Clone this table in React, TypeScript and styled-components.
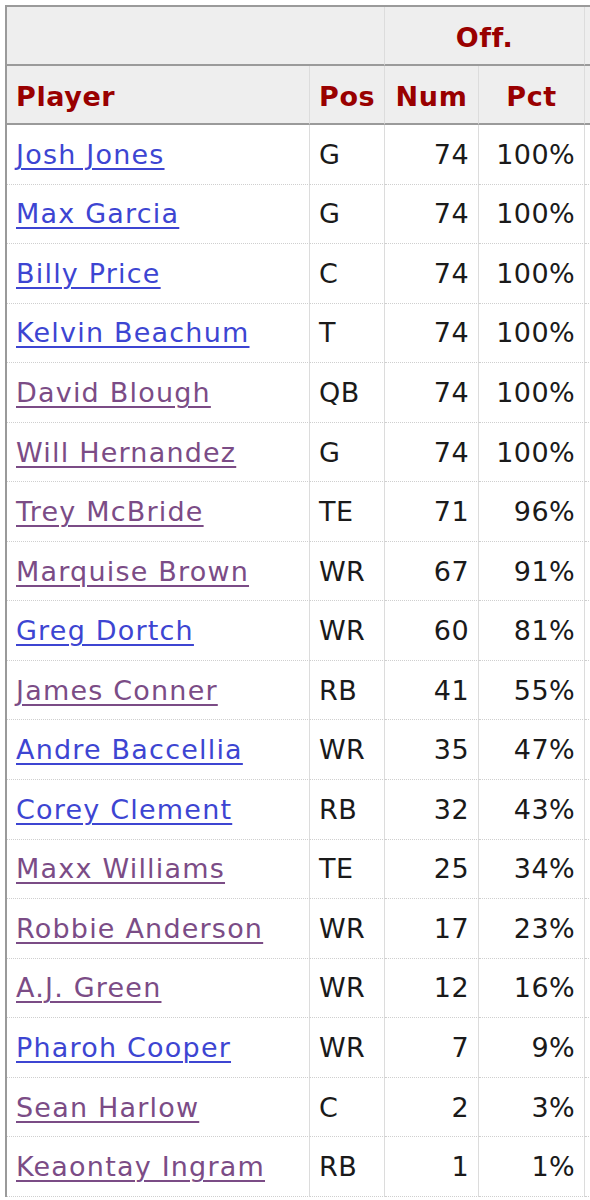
import React from "react";
import styled, { createGlobalStyle } from "styled-components";

const Global = createGlobalStyle`
  html, body {
    margin: 0;
    padding: 0;
    overflow: hidden;
    background: #fff;
  }
  body {
    font-family: "DejaVu Sans", Verdana, sans-serif;
  }
`;

const Wrap = styled.div`
  padding: 5px 0 0 5px;
  width: 800px;
`;

const Table = styled.table`
  border-collapse: separate;
  border-spacing: 0;
  table-layout: fixed;
  width: 680px;
  border-top: 2px solid #9a9a9a;
  border-left: 2px solid #9a9a9a;
  font-size: 27px;
  color: #1a1a1a;
`;

const HeadCell = styled.th<{ $align?: string }>`
  background: #eeeeee;
  color: #990000;
  font-weight: bold;
  height: 59px;
  padding: 3px 9px 0;
  letter-spacing: 0.6px;
  text-align: ${(p) => p.$align || "left"};
  border-bottom: 2px solid #9a9a9a;
  border-right: 1px solid #dcdcdc;
  white-space: nowrap;
  box-sizing: border-box;
  vertical-align: middle;
`;

const Cell = styled.td<{ $align?: string }>`
  height: 59.55px;
  box-sizing: border-box;
  padding: 0 9px;
  letter-spacing: 0.4px;
  text-align: ${(p) => p.$align || "left"};
  border-bottom: 1px dotted #cfcfcf;
  border-right: 1px solid #dcdcdc;
  white-space: nowrap;
  vertical-align: middle;
`;

const PlayerLink = styled.a<{ $visited?: boolean }>`
  color: ${(p) => (p.$visited ? "#7b4c86" : "#3d45d2")};
  letter-spacing: 1.2px;
  text-decoration: underline;
  text-underline-offset: 4px;
  text-decoration-thickness: 1.5px;
`;

type Row = { name: string; pos: string; num: number; pct: string; v: boolean };

const rows: Row[] = [
  { name: "Josh Jones", pos: "G", num: 74, pct: "100%", v: false },
  { name: "Max Garcia", pos: "G", num: 74, pct: "100%", v: false },
  { name: "Billy Price", pos: "C", num: 74, pct: "100%", v: false },
  { name: "Kelvin Beachum", pos: "T", num: 74, pct: "100%", v: false },
  { name: "David Blough", pos: "QB", num: 74, pct: "100%", v: true },
  { name: "Will Hernandez", pos: "G", num: 74, pct: "100%", v: true },
  { name: "Trey McBride", pos: "TE", num: 71, pct: "96%", v: true },
  { name: "Marquise Brown", pos: "WR", num: 67, pct: "91%", v: true },
  { name: "Greg Dortch", pos: "WR", num: 60, pct: "81%", v: false },
  { name: "James Conner", pos: "RB", num: 41, pct: "55%", v: true },
  { name: "Andre Baccellia", pos: "WR", num: 35, pct: "47%", v: false },
  { name: "Corey Clement", pos: "RB", num: 32, pct: "43%", v: false },
  { name: "Maxx Williams", pos: "TE", num: 25, pct: "34%", v: true },
  { name: "Robbie Anderson", pos: "WR", num: 17, pct: "23%", v: true },
  { name: "A.J. Green", pos: "WR", num: 12, pct: "16%", v: true },
  { name: "Pharoh Cooper", pos: "WR", num: 7, pct: "9%", v: false },
  { name: "Sean Harlow", pos: "C", num: 2, pct: "3%", v: true },
  { name: "Keaontay Ingram", pos: "RB", num: 1, pct: "1%", v: true },
];

export default function App() {
  return (
    <>
      <Global />
      <Wrap>
        <Table>
          <colgroup>
            <col style={{ width: 303 }} />
            <col style={{ width: 75 }} />
            <col style={{ width: 94 }} />
            <col style={{ width: 106 }} />
            <col style={{ width: 100 }} />
          </colgroup>
          <thead>
            <tr>
              <HeadCell colSpan={2}></HeadCell>
              <HeadCell colSpan={2} $align="center">
                Off.
              </HeadCell>
              <HeadCell></HeadCell>
            </tr>
            <tr>
              <HeadCell>Player</HeadCell>
              <HeadCell>Pos</HeadCell>
              <HeadCell $align="center">Num</HeadCell>
              <HeadCell $align="center">Pct</HeadCell>
              <HeadCell></HeadCell>
            </tr>
          </thead>
          <tbody>
            {rows.map((r) => (
              <tr key={r.name}>
                <Cell>
                  <PlayerLink href="#" $visited={r.v}>
                    {r.name}
                  </PlayerLink>
                </Cell>
                <Cell>{r.pos}</Cell>
                <Cell $align="right">{r.num}</Cell>
                <Cell $align="right">{r.pct}</Cell>
                <Cell></Cell>
              </tr>
            ))}
          </tbody>
        </Table>
      </Wrap>
    </>
  );
}
